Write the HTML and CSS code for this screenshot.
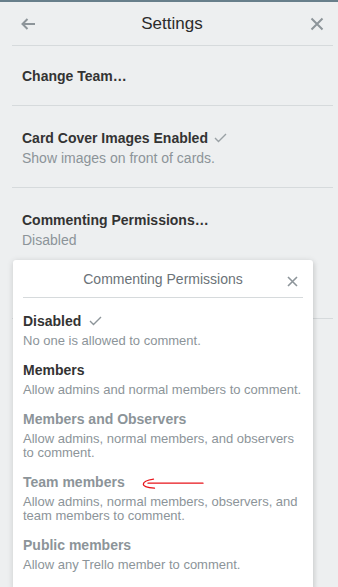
FILE: index.html
```html
<!DOCTYPE html>
<html lang="en">
<head>
    <meta charset="UTF-8">
    <meta name="viewport" content="width=device-width, initial-scale=1.0">
    <title>Board Settings</title>
    <link rel="stylesheet" href="styles.css">
</head>
<body>
    <div class="panel">
        <div class="panel-header">
            <a href="#" class="icon-btn back-btn" aria-label="Back">
                <svg width="16" height="14" viewBox="0 0 16 14"><path d="M15 7H2.5M7.5 2L2.5 7l5 5" fill="none" stroke="#8d959a" stroke-width="2"/></svg>
            </a>
            <h2 class="panel-title">Settings</h2>
            <a href="#" class="icon-btn close-btn" aria-label="Close">
                <svg width="14" height="14" viewBox="0 0 14 14"><path d="M1.5 1.5l11 11M12.5 1.5l-11 11" fill="none" stroke="#8d959a" stroke-width="2"/></svg>
            </a>
        </div>

        <ul class="settings">
            <li class="setting setting-single">
                <div class="setting-name">Change Team…</div>
            </li>
            <li class="setting">
                <div class="setting-name">Card Cover Images Enabled
                    <svg class="check" width="13" height="10" viewBox="0 0 13 10"><path d="M1 5l3.5 3.5L12 1" fill="none" stroke="#9aa1a5" stroke-width="1.4"/></svg>
                </div>
                <div class="setting-desc">Show images on front of cards.</div>
            </li>
            <li class="setting setting-tall">
                <div class="setting-name">Commenting Permissions…</div>
                <div class="setting-desc">Disabled</div>
            </li>
        </ul>

        <div class="popover">
            <div class="popover-header">
                <span class="popover-title">Commenting Permissions</span>
                <a href="#" class="popover-close" aria-label="Close">
                    <svg width="11" height="11" viewBox="0 0 11 11"><path d="M1 1l9 9M10 1l-9 9" fill="none" stroke="#8d959a" stroke-width="1.6"/></svg>
                </a>
            </div>
            <ul class="options">
                <li class="option">
                    <div class="option-name">Disabled
                        <svg class="check" width="13" height="10" viewBox="0 0 13 10"><path d="M1 5l3.5 3.5L12 1" fill="none" stroke="#8d959a" stroke-width="1.4"/></svg>
                    </div>
                    <div class="option-desc">No one is allowed to comment.</div>
                </li>
                <li class="option">
                    <div class="option-name">Members</div>
                    <div class="option-desc">Allow admins and normal members to comment.</div>
                </li>
                <li class="option option-disabled">
                    <div class="option-name">Members and Observers</div>
                    <div class="option-desc">Allow admins, normal members, and observers to comment.</div>
                </li>
                <li class="option option-disabled option-marked">
                    <div class="option-name">Team members</div>
                    <div class="option-desc">Allow admins, normal members, observers, and team members to comment.</div>
                    <svg class="marker" width="64" height="14" viewBox="0 0 64 14"><path d="M62 5.2H7M12.5 1.2C7 2 2.5 3.6 2.3 6.2c-.2 2.6 5 3.4 11.2 4" fill="none" stroke="#e8141b" stroke-width="1.3" stroke-linecap="round"/></svg>
                </li>
                <li class="option option-disabled">
                    <div class="option-name">Public members</div>
                    <div class="option-desc">Allow any Trello member to comment.</div>
                </li>
            </ul>
        </div>
    </div>
</body>
</html>
```

FILE: styles.css
```css
* {
    margin: 0;
    padding: 0;
    box-sizing: border-box;
}

body {
    font-family: 'Liberation Sans', Arial, Helvetica, sans-serif;
    background: #edeff0;
    color: #333;
    height: 587px;
    overflow: hidden;
}

.panel {
    position: relative;
    border-top: 2px solid #687f8b;
    padding: 0 5px 0 12px;
    height: 100%;
}

.panel-header {
    display: flex;
    align-items: center;
    justify-content: space-between;
    height: 44px;
    padding: 0 9px 0 8px;
    border-bottom: 1px solid #d6dadc;
}

.icon-btn {
    display: flex;
    width: 16px;
}

.close-btn {
    justify-content: flex-end;
}

.panel-title {
    font-size: 17px;
    font-weight: normal;
    color: #2b2b2b;
}

.settings {
    list-style: none;
}

.setting {
    padding: 22px 10px 19px;
    border-bottom: 1px solid #d6dadc;
}

.setting-single {
    padding: 20px 10px 19px;
}

.setting-tall {
    height: 131px;
}

.setting-name {
    font-size: 14px;
    font-weight: bold;
    line-height: 20px;
    color: #333;
}

.setting-desc {
    font-size: 14px;
    line-height: 20px;
    color: #8c9499;
}

.check {
    margin-left: 2px;
}

.popover {
    position: absolute;
    left: 13px;
    top: 258px;
    width: 300px;
    height: 329px;
    background: white;
    border-radius: 3px 3px 0 0;
    box-shadow: 0 1px 6px rgba(0,0,0,0.14), 2px 2px 4px rgba(0,0,0,0.05);
    padding: 0 10px;
}

.popover-header {
    position: relative;
    height: 38px;
    display: flex;
    align-items: center;
    justify-content: center;
    border-bottom: 1px solid #d6dadc;
}

.popover-title {
    font-size: 14px;
    color: #6b7378;
}

.popover-close {
    position: absolute;
    right: 5px;
    top: 16px;
    display: flex;
}

.options {
    list-style: none;
    padding-top: 12px;
}

.option {
    position: relative;
    padding: 0 0 11px;
}

.option-name {
    font-size: 14px;
    font-weight: bold;
    line-height: 22px;
    color: #333;
}

.option-name .check {
    margin-left: 4px;
}

.option-desc {
    margin-top: 2px;
    font-size: 13px;
    line-height: 14px;
    color: #8c9499;
}

.option-disabled .option-name {
    color: #8c9499;
}

.marker {
    position: absolute;
    left: 118px;
    top: 7px;
}
```
